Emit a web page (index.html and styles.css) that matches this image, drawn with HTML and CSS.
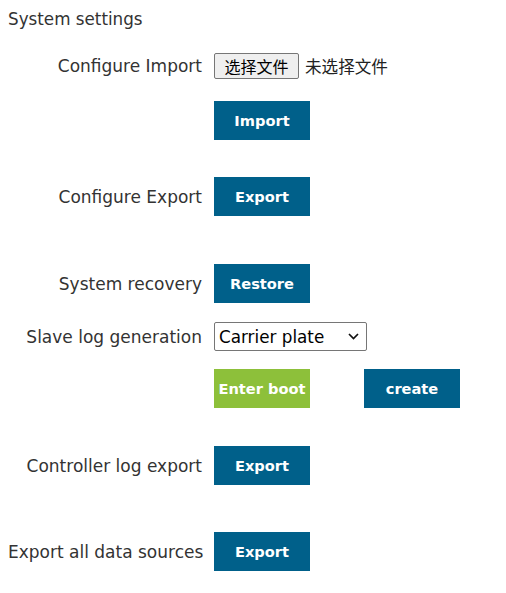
FILE: index.html
```html
<!DOCTYPE html>
<html lang="en">
<head>
<meta charset="utf-8">
<title>System settings</title>
<link rel="stylesheet" href="styles.css">
</head>
<body>
<div class="page">
  <div class="title">System settings</div>

  <div class="row r-import">
    <div class="label">Configure Import</div>
    <div class="field">
      <span class="file-btn">选择文件</span>
      <span class="file-name">未选择文件</span>
    </div>
  </div>
  <div class="row r-import-btn">
    <div class="label"></div>
    <div class="field"><button class="btn">Import</button></div>
  </div>

  <div class="row r-export">
    <div class="label">Configure Export</div>
    <div class="field"><button class="btn">Export</button></div>
  </div>

  <div class="row r-restore">
    <div class="label">System recovery</div>
    <div class="field"><button class="btn">Restore</button></div>
  </div>

  <div class="row r-slave">
    <div class="label">Slave log generation</div>
    <div class="field">
      <div class="select">
        <span>Carrier plate</span>
        <svg class="chev" width="11" height="7" viewBox="0 0 11 7"><path d="M1 1 L5.5 5.5 L10 1" fill="none" stroke="#111" stroke-width="1.7"/></svg>
      </div>
    </div>
  </div>
  <div class="row r-boot">
    <div class="label"></div>
    <div class="field boot-field">
      <button class="btn green">Enter boot</button>
      <button class="btn">create</button>
    </div>
  </div>

  <div class="row r-ctrl">
    <div class="label">Controller log export</div>
    <div class="field"><button class="btn">Export</button></div>
  </div>

  <div class="row r-all">
    <div class="label">Export all data sources</div>
    <div class="field"><button class="btn">Export</button></div>
  </div>
</div>
</body>
</html>
```

FILE: styles.css
```css
html, body {
  margin: 0;
  padding: 0;
  background: #fff;
}
body {
  font-family: "DejaVu Sans", Verdana, sans-serif;
  color: #333;
  font-size: 16px;
}
.page {
  padding: 8px;
  display: flex;
  flex-direction: column;
}
.title {
  font-size: 16.75px;
  line-height: 20px;
  margin-top: 1px;
}
.row {
  display: flex;
  align-items: center;
}
.label {
  width: 194px;
  text-align: right;
  flex: none;
  font-size: 17px;
  line-height: 20px;
  white-space: nowrap;
}
.field {
  margin-left: 12px;
  display: flex;
  align-items: center;
}
.r-import { margin-top: 24px; }
.r-import-btn { margin-top: 22px; }
.r-export { margin-top: 37px; }
.r-restore { margin-top: 48px; }
.r-slave { margin-top: 19px; }
.r-boot { margin-top: 18px; }
.r-ctrl { margin-top: 38px; }
.r-all { margin-top: 47px; }

.file-btn {
  font-family: "Noto Sans CJK SC", sans-serif;
  font-size: 16px;
  line-height: 24px;
  height: 24px;
  padding: 0 8px;
  border: 1px solid #767676;
  border-radius: 2px;
  background: #efefef;
  color: #000;
  width: 67px;
  text-align: center;
}
.file-name {
  font-family: "Noto Sans CJK SC", sans-serif;
  font-size: 16.6px;
  margin-left: 6px;
  color: #222;
}
.btn {
  width: 96px;
  height: 39px;
  border: none;
  border-radius: 0;
  background: #00608a;
  color: #fff;
  font-family: "DejaVu Sans", Verdana, sans-serif;
  font-weight: bold;
  font-size: 14.6px;
  padding: 0;
  cursor: pointer;
}
.btn.green {
  background: #8dc03a;
}
.boot-field {
  gap: 54px;
}
.select {
  box-sizing: border-box;
  width: 153px;
  height: 29px;
  border: 1px solid #767676;
  border-radius: 2px;
  display: flex;
  align-items: center;
  justify-content: space-between;
  padding: 0 7px 0 4px;
  color: #000;
  font-size: 16.8px;
}
.chev {
  display: block;
}
```
